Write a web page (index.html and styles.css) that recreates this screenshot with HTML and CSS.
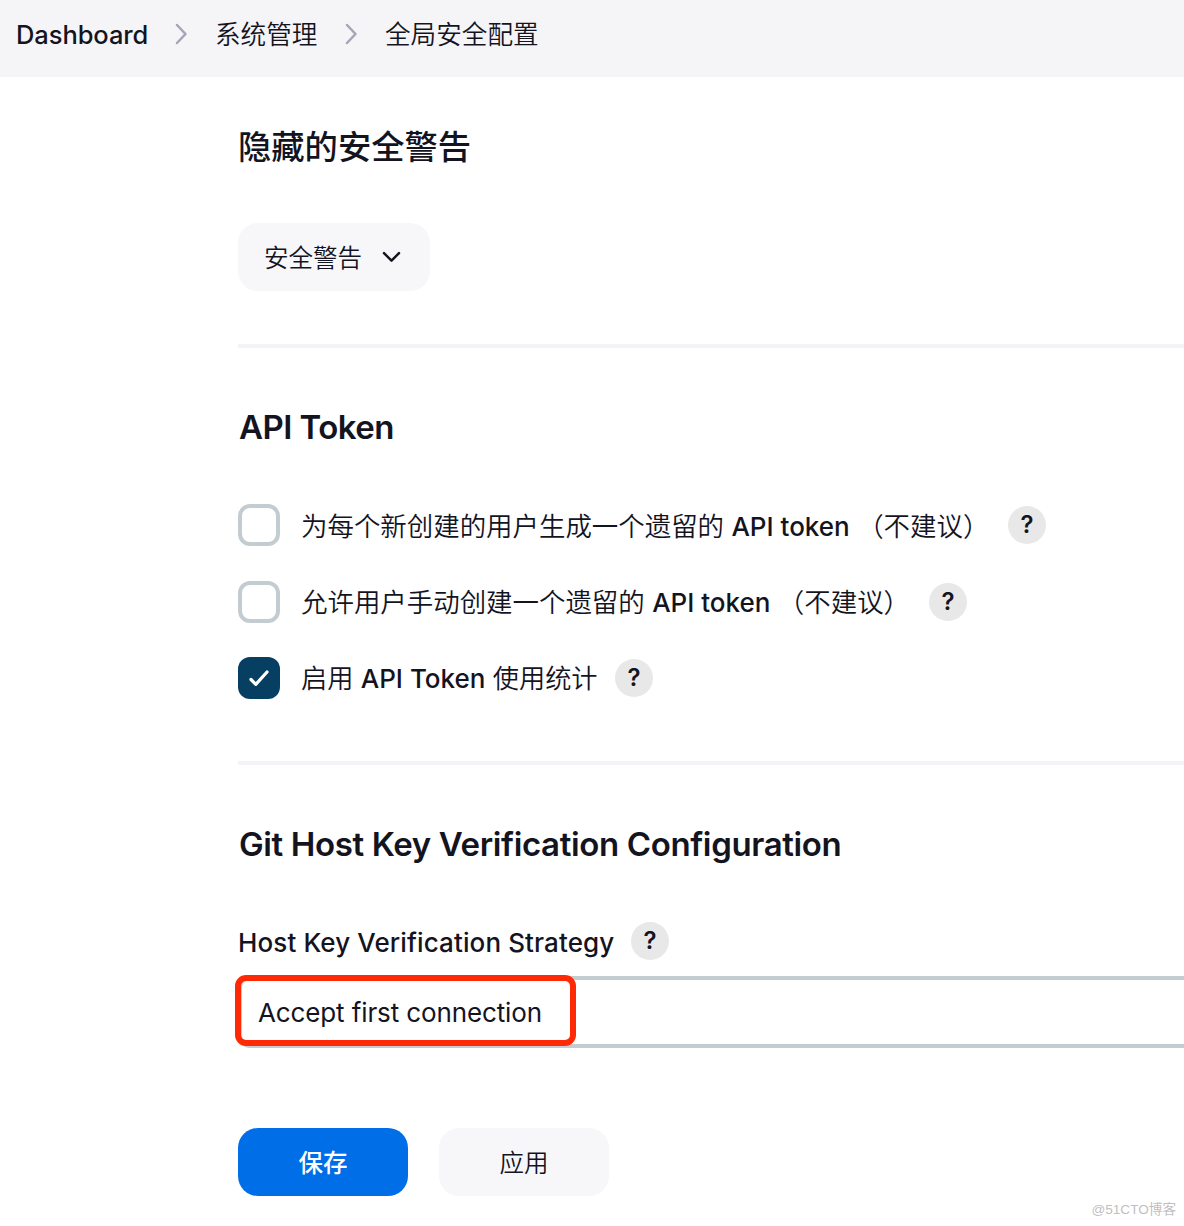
FILE: index.html
```html
<!DOCTYPE html>
<html lang="zh-CN">
<head>
<meta charset="utf-8">
<title>全局安全配置</title>
<link rel="stylesheet" href="styles.css">
</head>
<body>
<nav class="breadcrumbs">
  <span class="crumb crumb-home">Dashboard</span>
  <svg class="separator" viewBox="0 0 14 22"><path d="M3 2l8.5 9L3 20"/></svg>
  <span class="crumb crumb-manage">系统管理</span>
  <svg class="separator" viewBox="0 0 14 22"><path d="M3 2l8.5 9L3 20"/></svg>
  <span class="crumb crumb-security">全局安全配置</span>
</nav>
<main class="content">
  <section class="section warnings">
    <h2 class="title"><span class="title-zh">隐藏的安全警告</span></h2>
    <button class="button dropdown"><span class="dropdown-label">安全警告</span><svg class="chevron" viewBox="0 0 20 12"><path d="M2 2.2l7.5 7.5L17 2.2"/></svg></button>
  </section>
  <section class="section tokens">
    <h2 class="title"><span class="title-token">API Token</span></h2>
    <div class="option"><span class="checkbox"></span><span class="option-label label-create">为每个新创建的用户生成一个遗留的 <b>API token</b> （不建议）</span><span class="help">?</span></div>
    <div class="option"><span class="checkbox"></span><span class="option-label label-allow">允许用户手动创建一个遗留的 <b>API token</b> （不建议）</span><span class="help">?</span></div>
    <div class="option"><span class="checkbox checked"><svg viewBox="0 0 42 42"><path d="M13 22.5l4.8 4.8L29 15"/></svg></span><span class="option-label label-stats">启用 <b>API Token</b> 使用统计</span><span class="help">?</span></div>
  </section>
  <section class="section git">
    <h2 class="title"><span class="title-git">Git Host Key Verification Configuration</span></h2>
    <div class="field-label"><span class="strategy">Host Key Verification Strategy</span><span class="help">?</span></div>
    <div class="select"><span class="select-value">Accept first connection</span><span class="highlight"></span></div>
  </section>
  <div class="actions"><button class="button primary">保存</button><button class="button">应用</button></div>
</main>
<span class="watermark">@51CTO博客</span>
</body>
</html>
```
FILE: styles.css
```css
* { box-sizing: border-box; }
body { margin: 0; width: 1184px; height: 1226px; overflow: hidden; position: relative; background: #fff; color: #14141f; font: 26px/40px Inter, "Noto Sans CJK SC", sans-serif; }
.breadcrumbs { height: 77px; padding: 0 16px 7px; display: flex; align-items: center; background: #f5f5f8; white-space: nowrap; font-size: 25.5px; font-weight: 500; }
.crumb-home { width: 132px; letter-spacing: -.08px; padding-bottom: 1px; }
.crumb-manage, .crumb-security { font-weight: 350; font-size: 25.6px; }
.crumb-manage { width: 102px; }
.separator { width: 14px; height: 22px; margin: 0 27px 2px 26px; fill: none; stroke: #a5a5b5; stroke-width: 2.5; stroke-linecap: round; stroke-linejoin: round; }
.crumb-manage + .separator { margin-left: 27px; }
.content { padding-left: 238px; }
.section { border-bottom: 4px solid #f3f3f8; }
.title { margin: 0; height: 40px; line-height: 40px; font-size: 33px; font-weight: 600; white-space: nowrap; }
.title-zh { font-size: 33.3px; font-weight: 500; }
.title-token, .title-git { display: block; padding-left: 1px; line-height: 38px; letter-spacing: -.37px; }
.title-token { letter-spacing: -.55px; }
.warnings { height: 271px; padding-top: 50px; }
.button { height: 68px; width: 170px; border: 0; border-radius: 20px; padding: 1px 0 0; background: #f7f7fa; color: #14141f; font: 350 24.5px/40px Inter, "Noto Sans CJK SC", sans-serif; }
.dropdown { display: flex; align-items: center; width: 192px; padding: 1px 26px 0; margin-top: 56px; }
.chevron { width: 20px; height: 12px; margin: 0 0 1px 20px; fill: none; stroke: currentColor; stroke-width: 2.5; stroke-linecap: round; stroke-linejoin: round; }
.tokens { height: 417px; padding-top: 60px; }
.option { display: flex; align-items: center; height: 42px; margin-bottom: 34.5px; white-space: nowrap; }
.tokens .title { margin-bottom: 56px; }
.checkbox { width: 42px; height: 42px; flex: none; margin-right: 21px; border: 4px solid #c3ccd1; border-radius: 12px; }
.checkbox.checked { border: 0; background: #073f62; }
.checkbox svg { display: block; fill: none; stroke: #fff; stroke-width: 3.2; stroke-linecap: round; stroke-linejoin: round; }
.option-label { padding-top: 2px; font-size: 26.45px; font-weight: 350; }
.option-label b { font-size: 26px; font-weight: 500; }
.help { width: 38px; height: 38px; flex: none; border-radius: 50%; background: #e8e8e8; text-align: center; font-size: 24px; line-height: 38px; font-weight: 600; }
.label-create { width: 707px; }
.label-allow { width: 628px; }
.label-stats { width: 314px; font-size: 26.2px; }
.git { height: 283px; padding-top: 60px; border: 0; }
.field-label { display: flex; align-items: center; height: 38px; margin-top: 57px; font-weight: 500; white-space: nowrap; }
.strategy { width: 393px; padding-top: 3px; letter-spacing: .11px; }
.select { position: relative; height: 72px; margin-top: 16px; padding: 1px 20px 0 16px; border: 4px solid #c3ccd1; border-right: 0; border-radius: 12px 0 0 12px; line-height: 64px; letter-spacing: -.12px; }
.highlight { position: absolute; left: -7px; top: -5px; width: 341px; height: 71px; border: 6px solid #ff2a05; border-radius: 11px; }
.actions { display: flex; gap: 31px; padding-top: 80px; }
.primary { background: #006ee6; color: #fff; font-weight: 500; }
.watermark { position: absolute; right: 8px; bottom: 4px; color: #bfbfbf; font: 13.6px/24px "Liberation Sans", "Noto Sans CJK SC", sans-serif; }
```
